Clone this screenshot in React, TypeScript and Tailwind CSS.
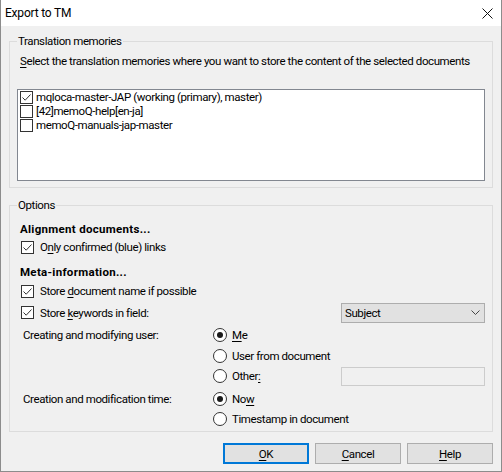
import React from "react";

function Key({ children }: { children: React.ReactNode }) {
  return <span className="underline decoration-1 underline-offset-[2px]">{children}</span>;
}

function Check({ checked }: { checked?: boolean }) {
  return (
    <span className="flex h-[13px] w-[13px] shrink-0 items-center justify-center border border-[#333333] bg-white">
      {checked && (
        <svg width="11" height="11" viewBox="0 0 11 11" fill="none">
          <path d="M1.5 5.5 L4.2 8.2 L9.5 2.5" stroke="#333333" strokeWidth="1" />
        </svg>
      )}
    </span>
  );
}

function Radio({ checked }: { checked?: boolean }) {
  return (
    <span className="flex h-[14px] w-[14px] shrink-0 items-center justify-center rounded-full border border-[#333333] bg-white">
      {checked && <span className="h-[6px] w-[6px] rounded-full bg-[#1a1a1a]" />}
    </span>
  );
}

function Button({ children, primary }: { children: React.ReactNode; primary?: boolean }) {
  return (
    <button
      className={
        primary
          ? "flex h-[21px] w-[86px] items-center justify-center border-2 border-[#0078d7] bg-[#e1e1e1]"
          : "flex h-[21px] w-[86px] items-center justify-center border border-[#adadad] bg-[#e1e1e1]"
      }
    >
      {children}
    </button>
  );
}

const memories = [
  { name: "mqloca-master-JAP (working (primary), master)", checked: true },
  { name: "[42]memoQ-help[en-ja]", checked: false },
  { name: "memoQ-manuals-jap-master", checked: false },
];

export default function App() {
  return (
    <div className="flex h-[472px] w-[502px] flex-col overflow-hidden border-x border-b border-[#8c8c8c] bg-[#f0f0f0] text-[11.5px] leading-4 tracking-[-0.4px] text-black [font-family:Roboto,'Liberation_Sans',sans-serif]">
      {/* title bar */}
      <div className="flex h-[26px] shrink-0 items-center bg-white pl-[4px] pr-[8px]">
        <span className="text-[12px] tracking-[-0.2px]">Export to TM</span>
        <svg className="ml-auto" width="11" height="11" viewBox="0 0 11 11" fill="none">
          <path d="M0.5 0.5 L10.5 10.5 M10.5 0.5 L0.5 10.5" stroke="#111111" strokeWidth="1" />
        </svg>
      </div>

      <div className="flex flex-col px-[8px] pt-[7px]">
        {/* Translation memories */}
        <fieldset className="border border-[#dcdcdc] pb-[6px] pl-[10px] pr-[7px] pt-[4px]">
          <legend className="-ml-[3px] px-[1px]">Translation memories</legend>
          <p className="h-4 whitespace-nowrap">
            <Key>S</Key>elect the translation memories where you want to store the content of the selected documents
          </p>
          <div className="-ml-[3px] mt-[20px] h-[92px] border border-[#828790] bg-white pl-[2px]">
            {memories.map((m) => (
              <div key={m.name} className="flex h-[14px] items-center gap-[3px]">
                <Check checked={m.checked} />
                <span>{m.name}</span>
              </div>
            ))}
          </div>
        </fieldset>

        {/* Options */}
        <fieldset className="mt-[9px] border border-[#dcdcdc] pb-[2px] pl-[10px] pr-[7px] pt-[8px]">
          <legend className="-ml-[3px] px-[1px]">Options</legend>

          <div className="h-4 font-bold tracking-[0.3px]">Alignment documents...</div>
          <div className="flex h-5 items-center gap-[6px] pl-[1px]">
            <Check checked />
            <span>
              O<Key>n</Key>ly confirmed (blue) links
            </span>
          </div>

          <div className="mt-[7px] h-4 font-bold tracking-[0.3px]">Meta-information...</div>
          <div className="mt-[1px] flex h-5 items-center gap-[6px] pl-[1px]">
            <Check checked />
            <span>
              Store <Key>d</Key>ocument name if possible
            </span>
          </div>
          <div className="mt-[1px] flex h-[21px] items-center">
            <div className="flex w-[321px] items-center gap-[6px] pl-[1px]">
              <Check checked />
              <span>
                Store <Key>k</Key>eywords in field:
              </span>
            </div>
            <div className="flex h-[20px] w-[144px] items-center justify-between border border-[#adadad] bg-[#e1e1e1] pl-[3px] pr-[4px]">
              <span>Subject</span>
              <svg width="9" height="5" viewBox="0 0 9 5" fill="none">
                <path d="M0.5 0.5 L4.5 4.5 L8.5 0.5" stroke="#444444" strokeWidth="1" />
              </svg>
            </div>
          </div>

          <div className="mt-[2px] flex h-5 items-center">
            <span className="w-[193px] pl-[3px]">Creating and modifying user:</span>
            <div className="flex items-center gap-[5px]">
              <Radio checked />
              <span>
                <Key>M</Key>e
              </span>
            </div>
          </div>
          <div className="flex h-[21px] items-center pl-[193px]">
            <div className="flex items-center gap-[5px]">
              <Radio />
              <span>User from document</span>
            </div>
          </div>
          <div className="flex h-5 items-center pl-[193px]">
            <div className="flex w-[128px] items-center gap-[5px]">
              <Radio />
              <span>
                Other<Key>:</Key>
              </span>
            </div>
            <div className="h-[19px] w-[144px] border border-[#cccccc] bg-[#f0f0f0]" />
          </div>

          <div className="mt-[3px] flex h-5 items-center">
            <span className="w-[193px] pl-[3px]">Creation and modification time:</span>
            <div className="flex items-center gap-[5px]">
              <Radio checked />
              <span>
                No<Key>w</Key>
              </span>
            </div>
          </div>
          <div className="flex h-5 items-center pl-[193px]">
            <div className="flex items-center gap-[5px]">
              <Radio />
              <span>Timestamp in document</span>
            </div>
          </div>
        </fieldset>

        <div className="mt-[11px] flex justify-end gap-[6px]">
          <Button primary>
            <Key>O</Key>K
          </Button>
          <Button>
            <Key>C</Key>ancel
          </Button>
          <Button>
            <Key>H</Key>elp
          </Button>
        </div>
      </div>
    </div>
  );
}
